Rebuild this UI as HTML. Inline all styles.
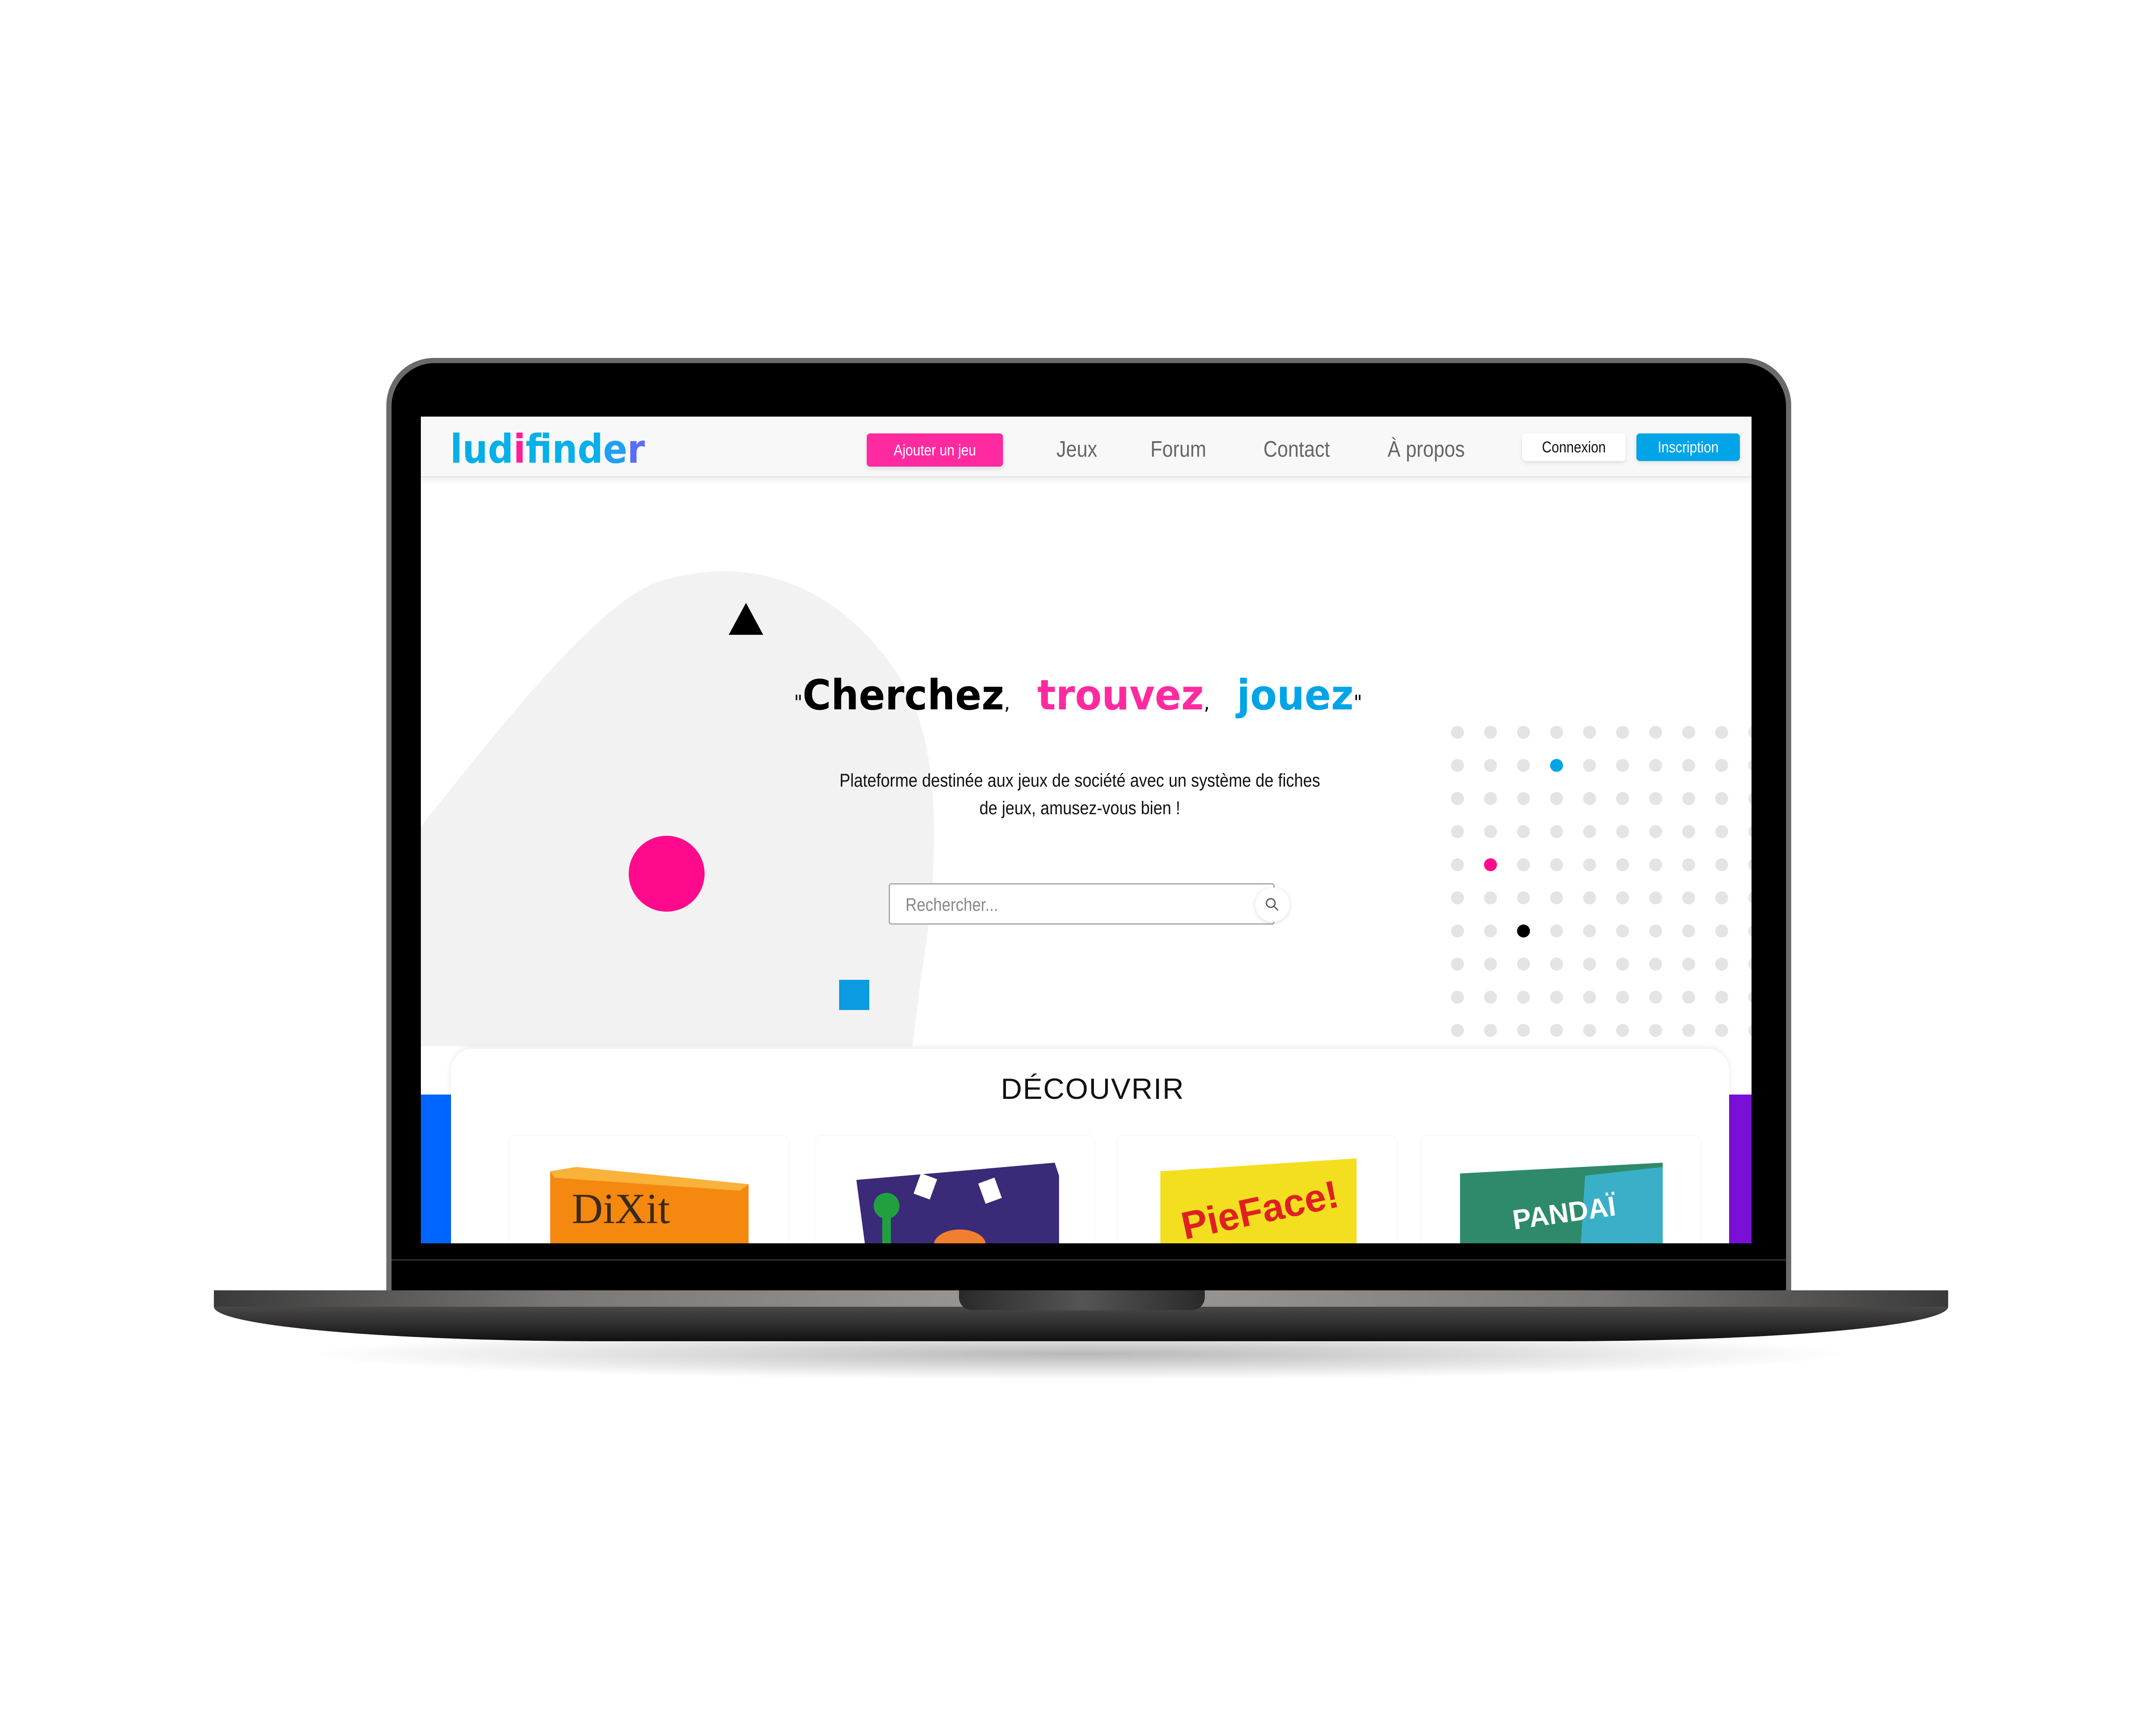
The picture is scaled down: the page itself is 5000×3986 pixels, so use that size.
<!DOCTYPE html>
<html><head><meta charset="utf-8"><style>
*{margin:0;padding:0;box-sizing:border-box}
body{width:5000px;height:3986px;background:#fff;position:relative;overflow:hidden;font-family:"Liberation Sans",sans-serif}
.abs{position:absolute}
.narrow{font-family:"Liberation Sans Narrow","Liberation Sans",sans-serif;transform:scaleX(.86)}
</style></head><body>
<!-- shadow -->
<div class="abs" style="left:700px;top:3080px;width:3600px;height:120px;border-radius:50%;background:radial-gradient(ellipse at center,rgba(0,0,0,.28),rgba(0,0,0,0) 70%)"></div>
<!-- lid -->
<div class="abs" style="left:896px;top:830px;width:3258px;height:2170px;border-radius:110px 110px 0 0;background:#6a6a6a"></div>
<div class="abs" style="left:908px;top:842px;width:3234px;height:2160px;border-radius:100px 100px 0 0;background:#000"></div>
<div class="abs" style="left:908px;top:2920px;width:3234px;height:3px;background:#333"></div>
<!-- base -->
<div class="abs" style="left:496px;top:2992px;width:4022px;height:40px;background:linear-gradient(90deg,#3a3a3a,#7a7775 20%,#a09c99 50%,#7a7775 80%,#3a3a3a)"></div>
<div class="abs" style="left:496px;top:3030px;width:4022px;height:80px;border-radius:0 0 900px 900px / 0 0 80px 80px;background:linear-gradient(#4a4847,#2a2929 60%,#111)"></div>
<div class="abs" style="left:2224px;top:2992px;width:570px;height:46px;border-radius:0 0 30px 30px;background:linear-gradient(90deg,#2a2a2a,#555 50%,#2a2a2a)"></div>
<!-- screen -->
<div class="abs" style="left:976px;top:966px;width:3086px;height:1917px;background:#fff;overflow:hidden">
  <svg class="abs" style="left:0;top:0" width="3086" height="1917">
    <path d="M0 950 C200 700 420 420 560 380 C800 310 1000 420 1120 620 C1200 760 1210 1000 1160 1300 L1140 1460 L0 1460 Z" fill="#f2f2f2"/>
    <polygon points="714,506 754,432 794,506" fill="#000"/>
    <circle cx="570" cy="1060" r="88" fill="#ff0a8c"/>
    <rect x="970" y="1306" width="70" height="70" fill="#0a9be0"/>
    <g id="dots"></g>
  </svg>
  <!-- nav -->
  <div class="abs" style="left:0;top:0;width:3086px;height:141px;background:#f8f8f8;box-shadow:0 6px 14px rgba(0,0,0,.08);border-bottom:3px solid #e6e6e6"></div>
  <div class="abs" style="left:68px;top:22px;font-size:92px;font-weight:bold;color:#06b0e8;transform:scaleX(.9);transform-origin:left;font-family:'DejaVu Sans',sans-serif">l<span style="color:#00aee6">u</span>d<span style="color:#ff1f9a">i</span>f<span style="color:#ff1f9a">i</span>nd<span style="color:#1fa0f0">e</span><span style="color:#5b6cf5">r</span></div>
  <div class="abs" style="left:1034px;top:39px;width:316px;height:77px;background:#ff2aa0;border-radius:8px;box-shadow:0 6px 10px rgba(0,0,0,.1)"></div>
  <div class="abs narrow" style="left:1034px;top:39px;width:316px;height:77px;color:#fff;font-size:36px;line-height:77px;text-align:center">Ajouter un jeu</div>
  <div class="abs narrow" style="left:1474px;top:46px;font-size:52px;color:#666;transform-origin:left">Jeux</div>
  <div class="abs narrow" style="left:1692px;top:46px;font-size:52px;color:#666;transform-origin:left">Forum</div>
  <div class="abs narrow" style="left:1954px;top:46px;font-size:52px;color:#666;transform-origin:left">Contact</div>
  <div class="abs narrow" style="left:2242px;top:46px;font-size:52px;color:#666;transform-origin:left">À propos</div>
  <div class="abs" style="left:2554px;top:39px;width:240px;height:64px;background:#fff;border-radius:8px;box-shadow:0 4px 10px rgba(0,0,0,.1)"></div>
  <div class="abs narrow" style="left:2554px;top:39px;width:240px;height:64px;color:#111;font-size:36px;line-height:64px;text-align:center">Connexion</div>
  <div class="abs" style="left:2819px;top:39px;width:240px;height:64px;background:#02a4e8;border-radius:8px;box-shadow:0 4px 10px rgba(0,0,0,.1)"></div>
  <div class="abs narrow" style="left:2819px;top:39px;width:240px;height:64px;color:#fff;font-size:36px;line-height:64px;text-align:center">Inscription</div>
  <!-- headline -->
  <div class="abs" style="left:0;width:3086px;top:590px;text-align:center;font-size:96px;font-weight:bold;font-family:'DejaVu Sans',sans-serif;padding-right:40px;transform:scaleX(.94)"><span style="font-size:46px;font-weight:normal">"</span>Cherchez<span style="font-size:46px;font-weight:normal">,</span>&nbsp;&nbsp;<span style="color:#ff2aa0">trouvez</span><span style="font-size:46px;font-weight:normal">,</span>&nbsp;&nbsp;<span style="color:#02a4e8">jouez</span><span style="font-size:46px;font-weight:normal">"</span></div>
  <div class="abs narrow" style="left:0;width:3100px;top:812px;text-align:center;font-size:43px;line-height:64px;color:#111;padding-right:50px;transform:scaleX(.87)">Plateforme destinée aux jeux de société avec un système de fiches<br>de jeux, amusez-vous bien !</div>
  <div class="abs" style="left:1085px;top:1082px;width:895px;height:96px;border:3px solid #aaa;border-radius:6px;background:#fff"></div>
  <div class="abs narrow" style="left:1124px;top:1108px;font-size:42px;color:#888;transform-origin:left">Rechercher...</div>
  <div class="abs" style="left:1935px;top:1092px;width:80px;height:80px;border-radius:50%;background:#fff;box-shadow:0 2px 10px rgba(0,0,0,.15)"></div>
  <svg class="abs" style="left:1955px;top:1112px" width="40" height="40"><circle cx="16" cy="16" r="10" fill="none" stroke="#555" stroke-width="3"/><line x1="23" y1="23" x2="33" y2="33" stroke="#555" stroke-width="3"/></svg>
  <!-- side bars -->
  <div class="abs" style="left:0;top:1572px;width:70px;height:345px;background:#0066ff"></div>
  <div class="abs" style="left:3034px;top:1572px;width:60px;height:345px;background:#7a10d6"></div>
  <!-- decouvrir card -->
  <div class="abs" style="left:70px;top:1466px;width:2964px;height:500px;background:#fff;border-radius:50px 50px 0 0;box-shadow:0 -4px 14px rgba(0,0,0,.08)"></div>
  <div class="abs" style="left:0;width:3086px;top:1520px;text-align:center;font-size:68px;letter-spacing:2px;color:#111;padding-left:30px">DÉCOUVRIR</div>
  <div class="abs" style="left:205px;top:1668px;width:646px;height:300px;border-radius:14px;box-shadow:0 0 8px rgba(0,0,0,.06)"></div>
  <div class="abs" style="left:915px;top:1668px;width:646px;height:300px;border-radius:14px;box-shadow:0 0 8px rgba(0,0,0,.06)"></div>
  <div class="abs" style="left:1616px;top:1668px;width:646px;height:300px;border-radius:14px;box-shadow:0 0 8px rgba(0,0,0,.06)"></div>
  <div class="abs" style="left:2320px;top:1668px;width:646px;height:300px;border-radius:14px;box-shadow:0 0 8px rgba(0,0,0,.06)"></div>
  <svg class="abs" style="left:0;top:1720px" width="3086" height="200">
    <polygon points="300,30 360,20 760,60 760,200 300,200" fill="#f5880f"/>
    <polygon points="300,30 360,20 760,60 740,75 310,45" fill="#f9b23a"/>
    <text x="350" y="150" font-size="100" font-family="Liberation Serif" fill="#3a2a1a">DiXit</text>
    <polygon points="1010,50 1470,10 1480,40 1480,200 1030,200" fill="#3b2a78"/>
    <circle cx="1080" cy="110" r="30" fill="#22a040"/><rect x="1070" y="110" width="20" height="90" fill="#22a040"/>
    <rect x="1150" y="40" width="40" height="50" fill="#fff" transform="rotate(20 1170 65)"/>
    <rect x="1300" y="50" width="40" height="50" fill="#fff" transform="rotate(-20 1320 75)"/>
    <ellipse cx="1250" cy="200" rx="60" ry="35" fill="#f08030"/>
    <polygon points="1715,30 2170,0 2170,200 1715,200" fill="#f3df1f"/>
    <text x="1760" y="160" font-size="90" font-weight="bold" fill="#e02020" transform="rotate(-12 1900 120)">PieFace!</text>
    <polygon points="2410,35 2880,10 2880,200 2410,200" fill="#2e8a6a"/>
    <polygon points="2700,40 2880,20 2880,200 2690,200" fill="#3ab0c8"/>
    <text x="2530" y="150" font-size="64" font-weight="bold" fill="#fff" transform="rotate(-8 2640 120)">PANDAÏ</text>
  </svg>
</div>
<script>
var g=document.getElementById('dots'),s='';
for(var r=0;r<10;r++)for(var c=0;c<10;c++){var x=3380-976+c*76.6,y=1698-966+r*76.8,f='#e4e4e4';
if(r==1&&c==3)f='#02a4e8';if(r==4&&c==1)f='#ff0a8c';if(r==6&&c==2)f='#000';
s+='<circle cx="'+x+'" cy="'+y+'" r="15" fill="'+f+'"/>';}
g.innerHTML=s;
</script>
</body></html>
